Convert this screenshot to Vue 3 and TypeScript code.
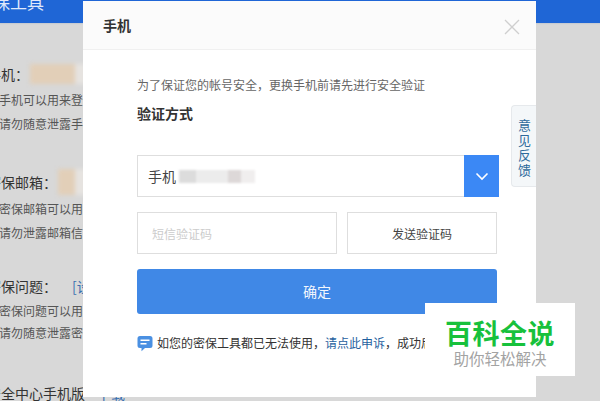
<script setup lang="ts">
interface Section { label: string; link?: string; lines: string[]; cls: string }
const sections: Section[] = [
  { label: '手机：', lines: ['手机可以用来登录帐号', '请勿随意泄露手机号码'], cls: 's1' },
  { label: '密保邮箱：', lines: ['密保邮箱可以用来找回', '请勿泄露邮箱信息给他'], cls: 's2' },
  { label: '密保问题：', link: '[设置]', lines: ['密保问题可以用来找回', '请勿随意泄露密保问题'], cls: 's3' },
]
</script>

<template>
  <div class="page">
    <div class="topbar"><span class="topbar-text">密保工具</span></div>
    <div class="bg-content">
      <section v-for="s in sections" :key="s.label" class="bg-section" :class="s.cls">
        <div class="bg-label">
          <span>{{ s.label }}</span>
          <a v-if="s.link" class="bg-link">{{ s.link }}</a>
          <span v-else class="smudge"><i class="sm-a"></i><i class="sm-b"></i></span>
        </div>
        <p v-for="l in s.lines" :key="l" class="bg-line">{{ l }}</p>
      </section>
      <div class="bg-label bg-last"><span>安全中心手机版</span><a class="bg-link last-link">下载</a></div>
    </div>

    <div class="modal">
      <header class="modal-head">
        <h2>手机</h2>
        <svg class="close" width="16" height="16" viewBox="0 0 16 16" aria-label="关闭">
          <path d="M1 1 15 15M15 1 1 15" stroke="#cfcfcf" stroke-width="1.3" fill="none" />
        </svg>
      </header>
      <div class="modal-body">
        <p class="tip">为了保证您的帐号安全，更换手机前请先进行安全验证</p>
        <h3>验证方式</h3>
        <div class="select">
          <span class="select-text">手机</span>
          <span class="masked"></span>
          <span class="select-btn">
            <svg width="14" height="9" viewBox="0 0 14 9"><path d="M1.5 1.5 7 7l5.5-5.5" stroke="#fff" stroke-width="1.6" fill="none" /></svg>
          </span>
        </div>
        <div class="code-row">
          <div class="code-input">短信验证码</div>
          <div class="code-btn">发送验证码</div>
        </div>
        <div class="confirm">确定</div>
        <p class="help">
          <svg class="help-icon" width="16" height="17" viewBox="0 0 16 17">
            <path d="M3 1h10a2.500 2.500 0 0 1 2.500 2.500v7A2.500 2.500 0 0 1 13 13H8l-3.500 3.200V13H3A2.500 2.500 0 0 1 .5 10.500v-7A2.500 2.500 0 0 1 3 1z" fill="#4a90e2" />
            <path d="M3.500 5.200h9M3.500 8.800h6" stroke="#fff" stroke-width="1.500" />
          </svg>
          <span>如您的密保工具都已无法使用，<a>请点此申诉</a>，成功后可更换</span>
        </p>
      </div>
      <aside class="feedback">意见反馈</aside>
    </div>

    <div class="watermark">
      <strong>百科全说</strong>
      <span>助你轻松解决</span>
    </div>
  </div>
</template>

<style>
html, body { margin: 0; padding: 0; }
</style>

<style scoped>
.page {
  position: relative;
  width: 600px;
  height: 401px;
  overflow: hidden;
  background: #d8d8d8;
  font-family: "Noto Sans CJK SC", "Liberation Sans", sans-serif;
}
.topbar {
  height: 23px;
  background: #1f66d6;
  overflow: hidden;
  box-shadow: 0 1px 1px #c8ccd2;
}
.topbar-text {
  display: block;
  margin: -10px 0 0 -24px;
  color: #dfe9fb;
  font-size: 17px;
  line-height: 24px;
}
.bg-content { color: #333; }
.bg-section { margin: 0; }
.s1 { padding-top: 39px; }
.s2 { padding-top: 34px; }
.s3 { padding-top: 29px; }
.bg-label {
  display: flex;
  align-items: center;
  height: 24px;
  margin-left: -13px;
  font-size: 14px;
  line-height: 24px;
  color: #333;
  white-space: nowrap;
}
.s1 .bg-label, .s3 .bg-label { margin-bottom: 2px; }
.s2 .bg-label { margin-bottom: 3px; }
.bg-link { margin-left: 15px; color: #3a6fb0; font-size: 14px; }
.last-link { margin-left: 12px; }
.smudge { display: flex; margin-left: 1px; filter: blur(2px); }
.sm-a { display: block; width: 45px; height: 20px; background: #e2cfb8; }
.sm-b { display: block; width: 15px; height: 20px; background: #e6e3e0; }
.s2 .sm-a { width: 17px; height: 26px; }
.s2 .sm-b { width: 15px; height: 26px; }
.bg-line {
  margin: 0 0 0 -1px;
  height: 24px;
  line-height: 24px;
  font-size: 12px;
  color: #555;
  white-space: nowrap;
}
.s3 .bg-line { height: 22px; line-height: 22px; }
.bg-last { margin-top: 37px; }

.modal {
  position: absolute;
  left: 83px;
  top: 1px;
  width: 453px;
  height: 396px;
  background: #fff;
  color: #333;
}
.modal-head {
  position: relative;
  display: flex;
  align-items: center;
  height: 48px;
  padding-left: 20px;
  background: #fbfbfb;
  border-bottom: 1px solid #f0f0f0;
}
.modal-head h2 { margin: 0; font-size: 14px; font-weight: 700; color: #333; }
.close { position: absolute; left: 421px; top: 18px; }
.modal-body { padding: 24px 0 0 54px; }
.tip { margin: 0; height: 22px; line-height: 22px; font-size: 12px; color: #666; white-space: nowrap; }
h3 { margin: 6px 0 0; height: 22px; line-height: 22px; font-size: 14px; font-weight: 700; color: #333; }
.select {
  position: relative;
  display: flex;
  align-items: center;
  box-sizing: border-box;
  width: 362px;
  height: 42px;
  margin-top: 31px;
  padding-left: 10px;
  border: 1px solid #dedede;
  font-size: 14px;
  color: #444;
}
.masked {
  width: 76px;
  height: 13px;
  margin-left: 3px;
  background: linear-gradient(90deg, #dcdcdc 0 22%, #ececec 22% 65%, #ddd8d8 65% 82%, #f0eeee 82%);
  filter: blur(1px);
}
.select-btn {
  position: absolute;
  right: -1px;
  top: -1px;
  display: flex;
  align-items: center;
  justify-content: center;
  width: 35px;
  height: 42px;
  background: #3b88f5;
}
.code-row { display: flex; gap: 10px; margin-top: 15px; }
.code-input, .code-btn {
  box-sizing: border-box;
  height: 42px;
  line-height: 42px;
  border: 1px solid #dedede;
  font-size: 12px;
}
.code-input { width: 200px; padding-left: 14px; color: #ccc; }
.code-btn { width: 150px; text-align: center; color: #444; }
.confirm {
  width: 360px;
  height: 45px;
  margin-top: 15px;
  border-radius: 3px;
  background: #4088e6;
  color: #f2f6fd;
  font-size: 14px;
  line-height: 45px;
  text-align: center;
}
.help {
  display: flex;
  align-items: center;
  gap: 4px;
  width: 400px;
  margin: 20px 0 0;
  height: 18px;
  font-size: 12px;
  line-height: 18px;
  color: #333;
  white-space: nowrap;
}
.help a { color: #1f5f9e; }
.help-icon { flex: none; }
.feedback {
  position: absolute;
  right: 0;
  top: 104px;
  box-sizing: border-box;
  width: 25px;
  height: 82px;
  padding: 11px 0 0 6px;
  background: #f4f7f9;
  border: 1px solid #e6e9ec;
  border-right: 0;
  border-radius: 4px 0 0 4px;
  color: #2f6a9c;
  font-size: 13px;
  line-height: 15px;
}
.watermark {
  position: absolute;
  left: 425px;
  top: 303px;
  display: flex;
  flex-direction: column;
  align-items: center;
  width: 150px;
  height: 73px;
  background: #fff;
}
.watermark strong {
  margin-top: 13px;
  height: 34px;
  color: #17c13c;
  font-size: 27px;
  line-height: 34px;
  font-weight: 700;
  letter-spacing: 0.5px;
}
.watermark span {
  height: 22px;
  margin-top: -3px;
  color: #a3a3a3;
  font-size: 15.500px;
  line-height: 22px;
}
</style>
